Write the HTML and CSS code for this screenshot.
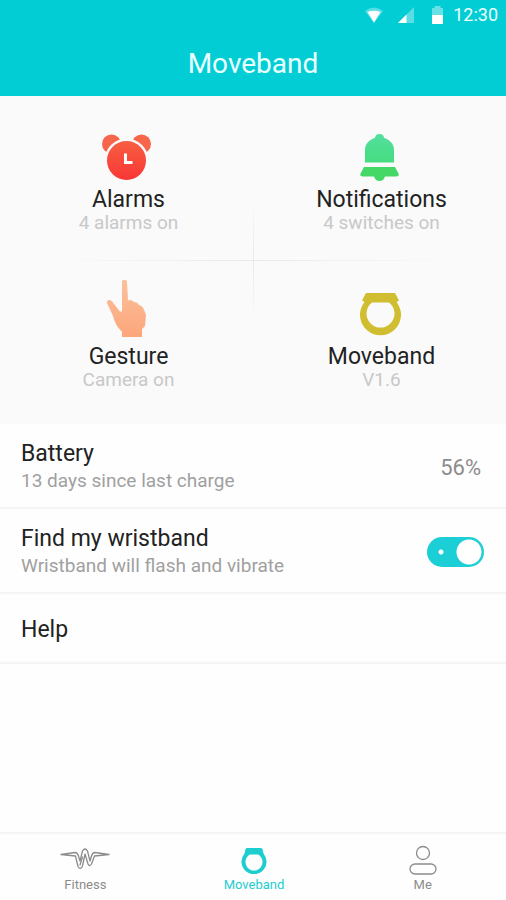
FILE: index.html
```html
<!DOCTYPE html>
<html lang="en">
<head>
<meta charset="utf-8">
<meta name="viewport" content="width=device-width, initial-scale=1">
<title>Moveband</title>
<link rel="stylesheet" href="styles.css">
</head>
<body>
<header class="header">
  <div class="status">
    <svg class="status-wifi" width="18" height="16" viewBox="0 0 18 16" aria-hidden="true"><path d="M0 4Q9-3 18 4L9 16Z" fill="#fff" opacity=".35"/><path d="M2.500 5Q9 2.500 15.500 5L9 15.500Z" fill="#fff"/></svg>
    <svg class="status-signal" width="16" height="16" viewBox="0 0 16 16" aria-hidden="true"><path d="M16 0V16H0Z" fill="#fff" opacity=".35"/><path d="M8.500 7.500V16H0Z" fill="#fff"/></svg>
    <svg class="status-battery" width="11" height="18" viewBox="0 0 11 18" aria-hidden="true"><path d="M0 2H2.500V0H8.500V2H11V9H0Z" fill="#fff" opacity=".4"/><path d="M0 9H11V18H0Z" fill="#fff"/></svg>
    <time>12:30</time>
  </div>
  <h1 class="title">Moveband</h1>
</header>

<main>
  <section class="tiles">
    <a class="tile" href="#alarms">
      <svg class="tile-icon" width="60" height="60" viewBox="0 0 60 60" aria-hidden="true">
        <defs><linearGradient id="red" x1="0" y1="0" x2="0" y2="1"><stop offset="0" stop-color="#f75f43"/><stop offset="1" stop-color="#f93634"/></linearGradient></defs>
        <circle cx="14.500" cy="22" r="9.500" fill="#f7654a"/><circle cx="44.500" cy="22" r="9.500" fill="#f7654a"/>
        <circle cx="29.500" cy="38.500" r="22" fill="#fafafa"/><circle cx="29.500" cy="38.500" r="19.500" fill="url(#red)"/>
        <path d="M28.500 31.500V40.500H35.500" fill="none" stroke="#fff" stroke-width="3"/>
      </svg>
      <span class="tile-name">Alarms</span>
      <span class="tile-note">4 alarms on</span>
    </a>
    <a class="tile" href="#notifications">
      <svg class="tile-icon" width="60" height="60" viewBox="0 0 60 60" aria-hidden="true">
        <defs><linearGradient id="green" x1="0" y1="0" x2="0" y2="1"><stop offset="0" stop-color="#52df9f"/><stop offset="1" stop-color="#47dc80"/></linearGradient></defs>
        <path d="M15 40.500V28C15 22 19 18 25 15.800C25.500 13 27 12 29.500 12S33.500 13 34 15.800C40 18 44 22 44 28V40.500Z" fill="url(#green)"/>
        <path d="M14 45H45L48.500 51.500Q49.500 54.500 46 54.500H35Q33.500 59 29.500 59T24 54.500H13Q9.500 54.500 10.500 51.500Z" fill="#45d866"/>
      </svg>
      <span class="tile-name">Notifications</span>
      <span class="tile-note">4 switches on</span>
    </a>
    <a class="tile tile-low" href="#gesture">
      <svg class="tile-icon" width="60" height="60" viewBox="0 0 60 60" aria-hidden="true">
        <defs><linearGradient id="skin" x1="0" y1="0" x2="0" y2="1"><stop offset="0" stop-color="#fbc19c"/><stop offset="1" stop-color="#fda67a"/></linearGradient></defs>
        <path d="M25 2Q27.500-.5 30 2L31 21.500Q34 20 37 23Q40 22.500 42 26Q46 27 47.500 32L49 36L48 47L45 50V58H25V53Q18 46 16 37L10 24Q9.500 20.500 13 21Q15.500 22 17 25L23 32.500H25Z" fill="url(#skin)"/>
      </svg>
      <span class="tile-name">Gesture</span>
      <span class="tile-note">Camera on</span>
    </a>
    <a class="tile tile-low" href="#moveband">
      <svg class="tile-icon" width="60" height="60" viewBox="0 0 60 60" aria-hidden="true">
        <path fill-rule="evenodd" d="M16 14H45L49 21.500L46.500 23A20.500 20.500 0 1 1 14.500 23L12 21.500ZM22 23.500A14 14 0 1 0 39 23.500Z" fill="#d0bd30"/>
      </svg>
      <span class="tile-name">Moveband</span>
      <span class="tile-note">V1.6</span>
    </a>
  </section>

  <section class="rows">
    <div class="row">
      <div class="row-text"><span class="row-name">Battery</span><span class="row-note">13 days since last charge</span></div>
      <span class="row-value">56%</span>
    </div>
    <label class="row" for="find">
      <span class="row-text"><span class="row-name">Find my wristband</span><span class="row-note">Wristband will flash and vibrate</span></span>
      <input class="switch" id="find" type="checkbox" role="switch" checked>
    </label>
    <a class="row row-short" href="#help"><span class="row-name">Help</span></a>
  </section>
</main>

<nav class="tabs">
  <a class="tab" href="#fitness">
    <svg width="50" height="30" viewBox="0 0 50 30" fill="none" stroke="#8c8c8c" stroke-width="1.300" stroke-linejoin="round" stroke-linecap="round" aria-hidden="true"><path d="M1 7.500L15 5.500Q17.500 5.500 18.500 9L20 14L22.500 4Q25 0 27.500 4L30 14L31.500 9Q32.500 5.500 35 5.500L49 7.500L34.500 9L31.500 17Q29.500 20 28 17L25 7L22.500 19Q20.500 23.500 18 19.500L15.500 9Z"/><path d="M20 18L22.500 10"/></svg>
    Fitness
  </a>
  <a class="tab tab-active" href="#moveband" aria-current="page">
    <svg width="30" height="30" viewBox="0 0 30 30" aria-hidden="true"><path fill-rule="evenodd" d="M6.500 2Q7 1 8.500 1H21.500Q23 1 23.500 2L24.500 6.500A12.500 12.500 0 1 1 5.500 6.500ZM11 7.500A8.500 8.500 0 1 0 19 7.500Z" fill="#1dcdd0"/></svg>
    Moveband
  </a>
  <a class="tab" href="#me">
    <svg width="30" height="30" viewBox="0 0 30 30" fill="none" stroke="#8c8c8c" stroke-width="1.300" aria-hidden="true"><circle cx="15" cy="6" r="6.500"/><rect x="2" y="17" width="26" height="10" rx="5"/></svg>
    Me
  </a>
</nav>
</body>
</html>
```
FILE: styles.css
```css
* { box-sizing: border-box; }

body {
  margin: 0;
  min-height: 100vh;
  display: flex;
  flex-direction: column;
  background: #fefefe;
  color: #222;
  font-family: Roboto, "Liberation Sans", sans-serif;
}

a { color: inherit; text-decoration: none; }

.header {
  height: 96px;
  background: #02cdd4;
  color: #e9ffff;
}

.status {
  display: flex;
  justify-content: flex-end;
  align-items: center;
  height: 30px;
  padding-right: 8px;
  font-size: 18px;
  line-height: 30px;
}

.status-wifi { margin-right: 15px; }
.status-signal { margin-right: 18px; }
.status-battery { margin-right: 10px; }

.title {
  margin: 17px 0 0;
  font-size: 28px;
  line-height: 34px;
  font-weight: 400;
  text-align: center;
}

.tiles {
  display: grid;
  grid-template-columns: 1fr 1fr;
  grid-auto-rows: 164px;
  background:
    linear-gradient(90deg, transparent, #e9e9e9, transparent) center / 80% 1px no-repeat,
    linear-gradient(transparent, #e9e9e9, transparent) center / 1px 130px no-repeat,
    #fafafa;
}

.tile {
  display: flex;
  flex-direction: column;
  align-items: center;
  padding-top: 26px;
}

.tile-low { padding-top: 19px; }

.tile-icon { display: block; margin-bottom: 4px; }

.tile-name {
  padding-left: 4px;
  font-size: 23px;
  line-height: 27px;
}

.tile-note {
  padding-left: 4px;
  color: #c8c8c8;
  font-size: 19px;
  line-height: 20px;
}

.row {
  display: flex;
  align-items: center;
  justify-content: space-between;
  min-height: 85px;
  padding: 3px 22px 0 21px;
  border-bottom: 2px solid #f5f5f5;
}

.row-short { min-height: 70px; }

.row-text { display: flex; flex-direction: column; }

.row-name { font-size: 23px; line-height: 28px; }

.row-note { color: #a0a0a0; font-size: 19px; line-height: 26px; }

.row-value { color: #8c8c8c; font-size: 22px; padding-right: 3px; }

.switch {
  appearance: none;
  flex: none;
  width: 57px;
  height: 30px;
  margin: 0;
  border-radius: 15px;
  background: #c8c8c8;
}

.switch:checked {
  background:
    radial-gradient(circle at 42px 15px, #fff 12px, transparent 13px),
    radial-gradient(circle at 14px 15px, #fff 2px, transparent 3px),
    #1ccfd6;
}

.tabs {
  display: grid;
  grid-template-columns: repeat(3, 1fr);
  height: 68px;
  margin-top: auto;
  border-top: 2px solid #f5f5f5;
}

.tab {
  display: flex;
  flex-direction: column;
  align-items: center;
  padding: 13px 0 0 2px;
  color: #8c8c8c;
  font-size: 13px;
  line-height: 16px;
}

.tab svg { overflow: visible; }

.tab-active { color: #1dcdd0; }
```
